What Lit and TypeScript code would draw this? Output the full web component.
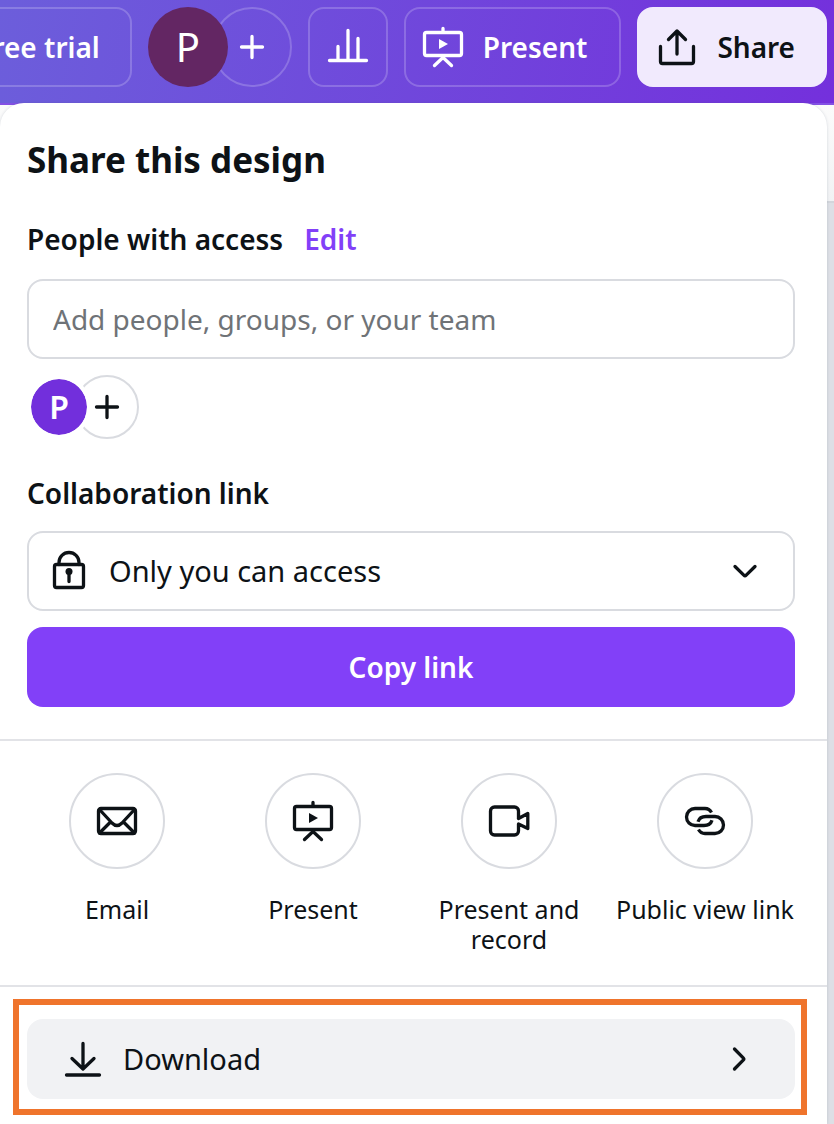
import { LitElement, html, css, svg } from "lit";
import { customElement, property } from "lit/decorators.js";

const glyphs = {
  plus: svg`<path d="M24 13.5V34.5M13.5 24H34.5"/>`,
  chart: svg`<path d="M5.5 37.5H42.5M14 23.5V36M24 7.5V36M34 15.5V36"/>`,
  present: svg`<rect x="5.5" y="9.5" width="37" height="23" rx="2"/><path d="M24 5.5V9M15.5 42.5L24 34.5L32.5 42.5"/><path class="solid" d="M20 16L29 21L20 26Z"/>`,
  share: svg`<path d="M7.5 23.5V38.5a2 2 0 0 0 2 2h29a2 2 0 0 0 2-2V23.5M24 31V8M15.5 16.5L24 8L32.5 16.5"/>`,
  lock: svg`<rect x="9.5" y="17.5" width="29" height="23" rx="2"/><path d="M14 17.5V15.5a10 10 0 0 1 20 0V17.5M24 25V34.5"/><circle class="solid" cx="24" cy="24.5" r="3.5"/>`,
  down: svg`<path d="M14 19.5L22.8 28.2a1.7 1.7 0 0 0 2.4 0L34 19.5"/>`,
  right: svg`<path d="M19.5 14L28.2 22.8a1.7 1.7 0 0 1 0 2.4L19.5 34"/>`,
  email: svg`<rect x="5.5" y="11.5" width="37" height="25" rx="2.5"/><path d="M6.5 12.5L19 26Q24 31 29 26L41.5 12.5M6.5 36L17.5 25M41.5 36L30.5 25"/>`,
  video: svg`<path d="M33.5 21.5V14a4 4 0 0 0-4-4H9.5a4 4 0 0 0-4 4V34a4 4 0 0 0 4 4H29.5a4 4 0 0 0 4-4V27L42.8 31.5V16.5L33.5 21.5"/>`,
  link: svg`<path class="flat" d="M30.5 15.5C29 12.8 27 11.5 24 11.5H14a8.5 8.5 0 0 0 0 17H23C27 28.5 30 26.5 31 23.2"/><path class="flat" d="M17.5 32.5C19 35.2 21 36.5 24 36.5H34a8.5 8.5 0 0 0 0-17H25C21 19.5 18 21.5 17 24.8"/>`,
  download: svg`<path d="M7.5 40H40.5M24 8.5V34M13 23.5L24 34L35 23.5"/>`,
};

type GlyphName = keyof typeof glyphs;

@customElement("ui-icon")
class UiIcon extends LitElement {
  @property() name: GlyphName = "plus";

  static styles = css`
    :host {
      display: block;
      flex: none;
      width: 48px;
      height: 48px;
      pointer-events: none;
    }
    .glyph {
      display: block;
      fill: none;
      stroke: currentColor;
      stroke-width: 3.3;
      stroke-linecap: round;
      stroke-linejoin: round;
    }
    .solid {
      fill: currentColor;
      stroke: none;
    }
    .flat {
      stroke-linecap: butt;
    }
  `;

  render() {
    return html`<svg class="glyph" viewBox="0 0 48 48" width="48" height="48" aria-hidden="true">
      ${glyphs[this.name]}
    </svg>`;
  }
}

const channels: { icon: GlyphName; label: string }[] = [
  { icon: "email", label: "Email" },
  { icon: "present", label: "Present" },
  { icon: "video", label: "Present and record" },
  { icon: "link", label: "Public view link" },
];

@customElement("app-root")
class AppRoot extends LitElement {
  static styles = css`
    :host {
      display: flex;
      flex-direction: column;
      min-height: 100vh;
      overflow: hidden;
      color: #0d1216;
      font: 400 28px/40px "Noto Sans", "Open Sans", sans-serif;
    }
    * {
      box-sizing: border-box;
    }
    button,
    input,
    select {
      margin: 0;
      font: inherit;
      color: inherit;
      appearance: none;
    }
    button {
      padding: 0;
      border: 0;
      background: none;
      cursor: pointer;
    }
    h1,
    h2 {
      margin: 0;
    }

    .topbar {
      display: flex;
      justify-content: flex-end;
      gap: 16px;
      padding: 7px 7px 16px;
      border-bottom: 2px solid #8350e4;
      background: linear-gradient(100deg, #6c5edb, #7430dc);
      background-origin: border-box;
      color: #fff;
      font-weight: 600;
    }
    .tool {
      display: flex;
      flex: none;
      align-items: center;
      justify-content: center;
      gap: 16px;
      height: 80px;
      min-width: 80px;
      border: 2px solid #ffffff33;
      border-radius: 16px;
      white-space: nowrap;
    }
    .tool.labelled {
      padding: 0 32px 0 13px;
    }
    .tool.trial {
      padding: 0 30px;
    }
    .tool.share {
      padding: 0 30px 0 14px;
      border-color: #f1eafd;
      background: #f1eafd;
      color: #0d1216;
    }
    .people {
      display: flex;
      flex: none;
    }
    .avatar {
      z-index: 1;
      border-radius: 50%;
      text-align: center;
    }
    .round {
      display: flex;
      align-items: center;
      justify-content: center;
      margin-left: -16px;
      border: 2px solid #d9dbe0;
      border-radius: 50%;
    }
    .topbar .avatar {
      width: 80px;
      height: 80px;
      background: #632663;
      font-size: 40px;
      font-weight: 400;
    }
    .topbar .round {
      width: 80px;
      height: 80px;
      border-color: #ffffff33;
    }

    .workspace {
      flex: 1;
      display: flex;
      padding-right: 7px;
      background: linear-gradient(#fbfbfb, #f1f2f4 96px, #d3d6dc 96px, #d3d6dc 98px, #dddfe5 98px);
    }
    .panel {
      flex: 1;
      min-width: 0;
      margin-top: -2px;
      padding-bottom: 9px;
      border-radius: 24px 24px 0 0;
      background: #fff;
      box-shadow: 0 0 3px #40576d33;
    }
    .section {
      padding: 33px 32px 32px 27px;
      border-bottom: 2px solid #e2e3e7;
    }
    .title {
      font-size: 35px;
      line-height: 48px;
      font-weight: 700;
    }
    .access {
      display: flex;
      gap: 21px;
      margin: 35px 0 20px;
    }
    .subtitle {
      font-size: 28px;
      font-weight: 600;
    }
    .edit {
      color: #8240f8;
      font-weight: 600;
      text-decoration: none;
    }
    .field {
      display: block;
      width: 100%;
      height: 80px;
      border: 2px solid #d9dbe0;
      border-radius: 16px;
      background: #fff;
    }
    .invite {
      padding: 0 24px;
    }
    .invite::placeholder {
      color: #6f7377;
      opacity: 1;
    }
    .members {
      display: flex;
      margin: 16px 0 34px;
    }
    .members .avatar {
      width: 64px;
      height: 64px;
      border: 4px solid #fff;
      background: #722fdc;
      background-clip: padding-box;
      color: #fff;
      font-size: 32px;
      font-weight: 600;
      line-height: 56px;
    }
    .members .round {
      width: 64px;
      height: 64px;
    }
    .picker {
      display: grid;
      grid-template-columns: auto 1fr auto;
      align-items: center;
      margin: 18px 0 16px;
    }
    .picker > * {
      grid-row: 1;
    }
    .picker .field {
      grid-column: 1 / 4;
      padding: 0 80px;
      font-size: 29px;
    }
    .lock,
    .caret {
      z-index: 1;
    }
    .lock {
      grid-column: 1;
      margin-left: 18px;
    }
    .caret {
      grid-column: 3;
      margin-right: 26px;
    }
    .copy {
      width: 100%;
      height: 80px;
      border-radius: 16px;
      background: #8240f8;
      color: #fff;
      font-weight: 600;
    }

    .channels {
      display: grid;
      grid-template-columns: repeat(4, 1fr);
      padding: 32px 24px 31px 19px;
      border-bottom: 2px solid #e2e3e7;
    }
    .channel {
      display: flex;
      flex-direction: column;
      align-items: center;
      gap: 25px;
      padding: 0 8px;
      font-size: 25px;
      line-height: 30px;
    }
    .disc {
      display: grid;
      place-items: center;
      width: 96px;
      height: 96px;
      border: 2px solid #d9dbe0;
      border-radius: 50%;
    }

    .highlight {
      margin: 12px 20px 0 13px;
      padding: 14px 6px 10px 8px;
      border: 6px solid #ef742c;
    }
    .download {
      display: flex;
      align-items: center;
      gap: 16px;
      width: 100%;
      height: 80px;
      padding: 0 32px;
      border-radius: 16px;
      background: #f1f2f4;
      font-size: 29px;
    }
    .grow {
      flex: 1;
      text-align: left;
    }
  `;

  render() {
    return html`
      <header class="topbar">
        <button class="tool trial">Start free trial</button>
        <div class="people">
          <button class="avatar">P</button>
          <button class="round" aria-label="Add people"><ui-icon name="plus"></ui-icon></button>
        </div>
        <button class="tool" aria-label="Insights"><ui-icon name="chart"></ui-icon></button>
        <button class="tool labelled"><ui-icon name="present"></ui-icon>Present</button>
        <button class="tool share"><ui-icon name="share"></ui-icon>Share</button>
      </header>
      <main class="workspace">
        <div class="panel">
          <section class="section">
            <h1 class="title">Share this design</h1>
            <div class="access">
              <label class="subtitle" for="invite">People with access</label>
              <a class="edit" href="#edit">Edit</a>
            </div>
            <input class="field invite" id="invite" type="text" placeholder="Add people, groups, or your team" />
            <div class="members">
              <span class="avatar">P</span>
              <button class="round" aria-label="Add member"><ui-icon name="plus"></ui-icon></button>
            </div>
            <label class="subtitle" for="link">Collaboration link</label>
            <div class="picker">
              <ui-icon class="lock" name="lock"></ui-icon>
              <select class="field" id="link">
                <option>Only you can access</option>
              </select>
              <ui-icon class="caret" name="down"></ui-icon>
            </div>
            <button class="copy">Copy link</button>
          </section>
          <nav class="channels" aria-label="Share options">
            ${channels.map(
              (c) => html`<button class="channel">
                <span class="disc"><ui-icon name=${c.icon}></ui-icon></span>
                <span>${c.label}</span>
              </button>`
            )}
          </nav>
          <div class="highlight">
            <button class="download">
              <ui-icon name="download"></ui-icon>
              <span class="grow">Download</span>
              <ui-icon name="right"></ui-icon>
            </button>
          </div>
        </div>
      </main>
    `;
  }
}
